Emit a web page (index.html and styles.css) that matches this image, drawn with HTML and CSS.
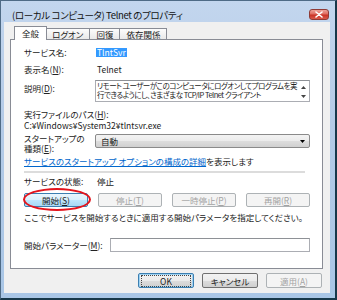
FILE: index.html
```html
<!DOCTYPE html>
<html lang="ja">
<head>
<meta charset="utf-8">
<title>Telnet のプロパティ</title>
<link rel="stylesheet" href="styles.css">
</head>
<body>
<div class="window">
  <div class="titlebar">
    <span class="title">(ローカル コンピュータ) Telnet のプロパティ</span>
    <span class="close"><svg width="8" height="7" viewBox="0 0 8 7"><path d="M1 1 L7 6 M7 1 L1 6" stroke="#fff" stroke-width="1.6" stroke-linecap="round"/></svg></span>
  </div>
  <div class="client">
    <div class="tabs">
      <div class="tab active">全般</div>
      <div class="tab">ログオン</div>
      <div class="tab">回復</div>
      <div class="tab">依存関係</div>
    </div>
    <div class="panel">
      <div class="row r1"><span class="label">サービス名:</span><span class="sel">TlntSvr</span></div>
      <div class="row r2"><span class="label">表示名(<u>N</u>):</span><span>Telnet</span></div>
      <div class="row r3">
        <span class="label narrow top">説明(<u>D</u>):</span>
        <div class="textbox desc">
          <div class="desc-text"><div>リモート ユーザーがこのコンピュータにログオンしてプログラムを実</div><div>行できるようにし、さまざまな TCP/IP Telnet クライアント</div></div>
          <div class="scroll">
            <svg width="5" height="3" viewBox="0 0 5 3"><path d="M0 3 L2.5 0 L5 3Z" fill="#444"/></svg>
            <svg width="5" height="3" viewBox="0 0 5 3"><path d="M0 0 L5 0 L2.5 3Z" fill="#444"/></svg>
          </div>
        </div>
      </div>
      <div class="row r4"><span>実行ファイルのパス(<u>H</u>):</span></div>
      <div class="row r5"><span>C:¥Windows¥System32¥tlntsvr.exe</span></div>
      <div class="row r6">
        <span class="label narrow two"><span class="ln">スタートアップの</span><span class="ln">種類(<u>E</u>):</span></span>
        <div class="combo"><span>自動</span><svg width="5" height="3" viewBox="0 0 5 3"><path d="M0 0 L5 0 L2.5 3Z" fill="#000"/></svg></div>
      </div>
      <div class="row r7"><span><a class="link" href="#">サービスのスタートアップ オプションの構成の詳細</a>を表示します</span></div>
      <div class="sep"></div>
      <div class="row r8"><span class="label">サービスの状態:</span><span>停止</span></div>
      <div class="row r9 btnrow">
        <button class="btn hot">開始(<u>S</u>)</button>
        <button class="btn disabled">停止(<u>T</u>)</button>
        <button class="btn disabled">一時停止(<u>P</u>)</button>
        <button class="btn disabled">再開(<u>R</u>)</button>
        <span class="ring"></span>
      </div>
      <div class="row r10"><span>ここでサービスを開始するときに適用する開始パラメータを指定してください。</span></div>
      <div class="row r11"><span class="label wide">開始パラメーター(<u>M</u>):</span><div class="textbox param"></div></div>
    </div>
    <div class="footer">
      <button class="fbtn default"><span>OK</span></button>
      <button class="fbtn">キャンセル</button>
      <button class="fbtn disabled">適用(<u>A</u>)</button>
    </div>
  </div>
</div>
</body>
</html>
```
FILE: styles.css
```css
* { box-sizing: border-box; }
html, body { margin: 0; padding: 0; }
body {
  width: 337px;
  height: 300px;
  overflow: hidden;
  background: #1d3f52;
  font-family: "Noto Sans CJK JP", "Noto Sans", sans-serif;
  font-size: 8.5px;
  font-feature-settings: "palt";
  color: #222;
}
u { text-decoration: underline; text-underline-offset: 1px; }

.window {
  width: 337px;
  height: 300px;
  display: flex;
  flex-direction: column;
  border-top: 1px solid #4f6b86;
  border-left: 1px solid #4f6b86;
  border-right: 2px solid #17384a;
  border-bottom: 2px solid #17384a;
  background: linear-gradient(180deg, #c3d6ee 0%, #b4cbe7 40%, #a9c6e6 100%);
}

.titlebar {
  height: 21px;
  flex: none;
  display: flex;
  align-items: flex-start;
  padding-left: 11px;
}
.title {
  font-size: 9.5px;
  letter-spacing: -0.35px;
  line-height: 12px;
  margin-top: 8px;
  color: #111;
  white-space: nowrap;
}
.close {
  margin-left: auto;
  margin-top: 8px;
  margin-right: 6px;
  width: 20px;
  height: 11px;
  border: 1px solid #8f3b36;
  border-radius: 3px;
  background: linear-gradient(180deg, #eda39a 0%, #df6b60 45%, #c93226 55%, #d9584a 100%);
  display: flex;
  align-items: center;
  justify-content: center;
}

.client {
  flex: 1;
  margin: 0 5px 5px 3px;
  background: #f0f0f0;
  padding: 4px 7px 0 6px;
  display: flex;
  flex-direction: column;
}

.tabs {
  display: flex;
  align-items: flex-end;
  height: 13px;
  padding-left: 4px;
}
.tab {
  height: 11px;
  line-height: 10px;
  padding: 0 6px;
  border: 1px solid #898c95;
  border-bottom: none;
  margin-left: -1px;
  background: linear-gradient(180deg, #fcfcfc, #e9e9e9);
  font-size: 8.5px;
  white-space: nowrap;
}
.tab.active {
  position: relative;
  z-index: 1;
  height: 14px;
  margin-bottom: -1px;
  line-height: 13px;
  padding: 0 7px;
  background: #fff;
  margin-left: 0;
  margin-right: -1px;
}

.panel {
  height: 230px;
  background: #fff;
  border: 1px solid #898c95;
  padding: 7px 12px 0 13px;
  display: flex;
  flex-direction: column;
}

.row {
  display: flex;
  align-items: center;
  line-height: 11px;
  white-space: nowrap;
}
.label { width: 73px; flex: none; }
.label.narrow { width: 71px; }
.label.wide { width: 86px; }
.label.top { align-self: flex-start; padding-top: 3px; }
.label.two { display: flex; flex-direction: column; line-height: 10px; }
.ln { display: block; height: 10px; }

.sel {
  background: #3399ff;
  color: #fff;
  padding: 0 1px;
  margin-left: -1px;
  line-height: 9px;
}

.r2 { margin-top: 6px; }
.r3 { margin-top: 5px; align-items: flex-start; }
.r4 { margin-top: 7px; }
.r5 { margin-top: 0; }
.r6 { margin-top: 2px; }
.r7 { margin-top: 3px; }
.sep {
  margin-top: 4px;
  height: 2px;
  margin-right: 5px;
  background: #dcdcdc;
}
.r8 { margin-top: 3px; }
.r9 { margin-top: 6px; }
.r10 { margin-top: 5px; }
.r11 { margin-top: 15px; }

.textbox {
  border: 1px solid #abadb3;
  border-top-color: #8e9196;
  background: #fff;
}
.desc {
  width: 215px;
  height: 22px;
  display: flex;
  overflow: hidden;
}
.desc-text {
  flex: 1;
  padding-left: 1px;
  line-height: 9px;
  font-size: 7.5px;
  letter-spacing: -0.5px;
  overflow: hidden;
}
.scroll {
  width: 11px;
  flex: none;
  display: flex;
  flex-direction: column;
  justify-content: space-between;
  align-items: center;
  padding: 5px 0 3px;
}

.combo {
  width: 215px;
  height: 14px;
  margin-top: 1px;
  align-self: flex-start;
  border: 1px solid #8a8a8a;
  border-radius: 2px;
  background: linear-gradient(180deg, #f3f3f3 0%, #ebebeb 50%, #dddddd 51%, #d0d0d0 100%);
  display: flex;
  align-items: center;
  justify-content: space-between;
  padding: 0 4px 0 5px;
}

.link { color: #0066cc; text-decoration: underline; }

.btnrow { position: relative; gap: 10px; }
.btn, .fbtn {
  font-family: inherit;
  font-feature-settings: "palt";
  font-size: 8.5px;
  color: #222;
  padding: 0;
  border: 1px solid #707070;
  border-radius: 2px;
  background: linear-gradient(180deg, #f2f2f2 0%, #ebebeb 50%, #dddddd 51%, #cfcfcf 100%);
  display: flex;
  align-items: center;
  justify-content: center;
  line-height: 10px;
}
.btn { width: 64px; height: 14px; }
.btn.hot {
  border-color: #3c7fb1;
  background: linear-gradient(180deg, #eaf6fd 0%, #d9f0fc 50%, #bee6fd 51%, #a7d9f5 100%);
}
.btn.disabled, .fbtn.disabled {
  border-color: #adb2b5;
  background: #f4f4f4;
  color: #a3a3a3;
}
.ring {
  position: absolute;
  left: -1px;
  top: -5px;
  width: 68px;
  height: 23px;
  border: 2px solid #e3141c;
  border-radius: 50%;
  pointer-events: none;
}

.param { width: 200px; height: 14px; }

.footer {
  display: flex;
  justify-content: flex-end;
  gap: 8px;
  margin-top: 4px;
  padding-right: 1px;
}
.fbtn { width: 56px; height: 15px; }
.fbtn.default {
  border-color: #3c7fb1;
  box-shadow: inset 0 0 0 1px #9fd3f3;
}
.fbtn.default span {
  outline: 1px dotted #444;
  outline-offset: 0;
  padding: 0 18px;
}
```
